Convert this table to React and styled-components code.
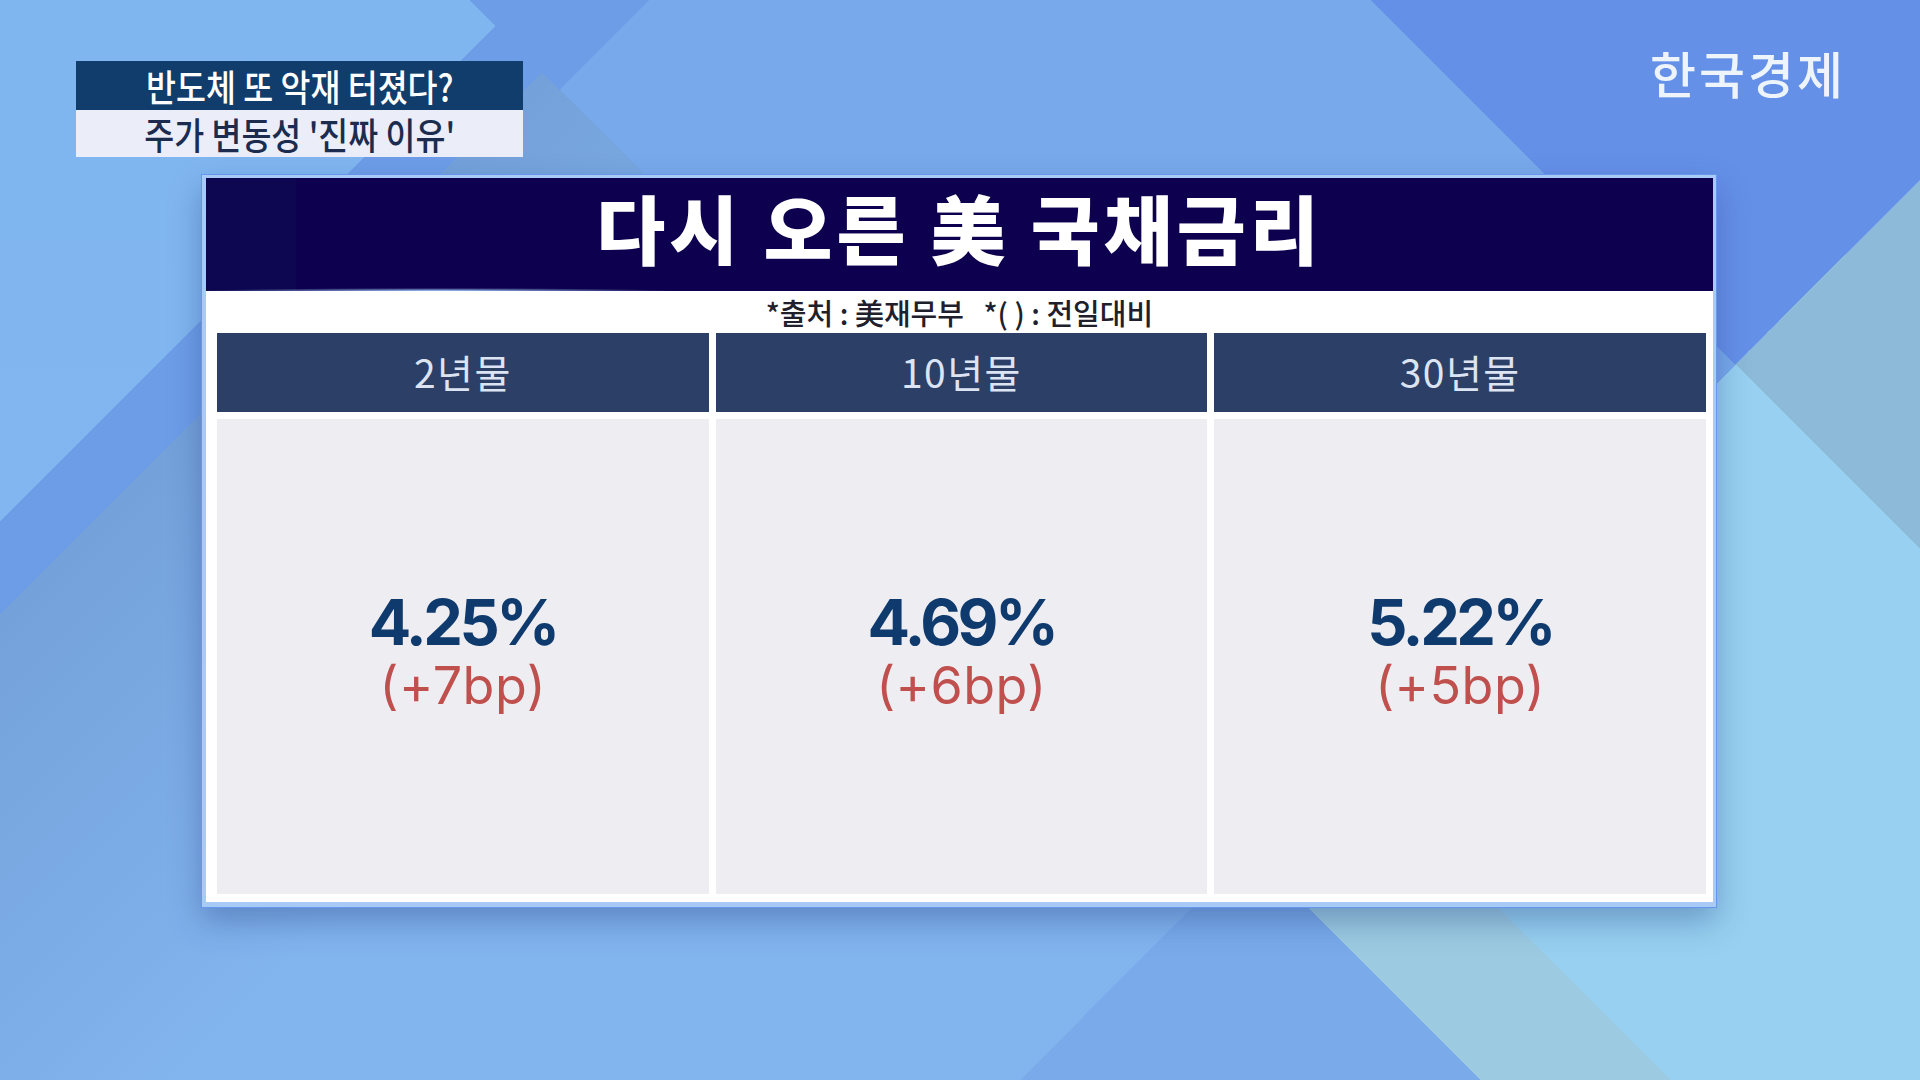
import styled, { createGlobalStyle } from "styled-components";

const GlobalStyle = createGlobalStyle`
    html, body {
        margin: 0;
        padding: 0;
    }
    body {
        width: 1920px;
        height: 1080px;
        overflow: hidden;
        background: #80b5ef;
    }
`;

// one quarter wedge of colour, opening clockwise from `from` degrees at (x, y)
const wedge = (x, y, from, color) =>
    `conic-gradient(from ${from}deg at ${x}px ${y}px, ${color} 0deg 90deg, transparent 90deg)`;

const backdrop = [
    wedge(1250, 850, 135, "#7aaaea"),
    wedge(1735.5, 364.5, 45, "#8cbad8"),
    wedge(1345, 755, 45, "#97d0f0"),
    wedge(1250, 850, 45, "#9ccbe1"),
    wedge(1735.5, 364.5, 315, "#6590e8"),
    wedge(560, 90, 45, "#78a9eb"),
    wedge(560, 90, 315, "#6d9de7"),
    "linear-gradient(135deg, transparent 17.4%, #6e9de8 17.4%, #6e9de8 20.5%, transparent 20.5%)",
    "linear-gradient(135deg, transparent 20.5%, #74a1da 20.5%, #82b4ee 42%)",
    "linear-gradient(180deg, #80b6f0, #82b6f0)",
].join(", ");

const Stage = styled.div`
    width: 1920px;
    height: 1080px;
    box-sizing: border-box;
    padding: 61px 74px 0 76px;
    display: flex;
    flex-direction: column;
    background: ${backdrop};
    font-family: "Noto Sans CJK KR", "Noto Sans", sans-serif;
`;

const TopRow = styled.div`
    display: flex;
    justify-content: space-between;
    align-items: flex-start;
    height: 96px;
`;

const Caption = styled.div`
    width: 447px;
    display: flex;
    flex-direction: column;
`;

const CaptionLine = styled.div`
    height: ${({ h }) => h}px;
    display: flex;
    align-items: center;
    justify-content: center;
    background: ${({ dark }) => (dark ? "#113d6c" : "#ebedf8")};
    color: ${({ dark }) => (dark ? "#ffffff" : "#1b2c4f")};
    font-size: 37px;
    font-weight: 500;
    line-height: 40px;
`;

const Squeeze = styled.span`
    display: inline-block;
    white-space: nowrap;
    transform: scaleX(0.88);
`;

const Logo = styled.div`
    margin-top: -14px;
    font-size: 50px;
    font-weight: 500;
    line-height: 1;
    letter-spacing: 3px;
    color: #eef4fc;
`;

const Panel = styled.section`
    margin: 18px 0 0 126px;
    width: 1514px;
    height: 732px;
    box-sizing: border-box;
    border-style: solid;
    border-color: #a7caf7;
    border-width: 3px 3px 5px 4px;
    background: #ffffff;
    box-shadow: 0 0 0 1px #6797ea, 0 14px 30px rgba(25, 55, 120, 0.35);
    display: flex;
    flex-direction: column;
`;

const Headline = styled.h1`
    margin: 0;
    height: 113px;
    flex: none;
    box-sizing: border-box;
    padding-bottom: 16px;
    display: flex;
    align-items: center;
    justify-content: center;
    background:
        radial-gradient(ellipse 240px 3px at 232px 100%, rgba(170, 215, 255, 0.95), transparent),
        linear-gradient(90deg, #0c0750 0, #0c0750 90px, #0d004f 90px);
    color: #ffffff;
    font-size: 75px;
    font-weight: 900;
    line-height: 1;
    letter-spacing: 4px;
`;

const Source = styled.p`
    margin: 0;
    height: 42px;
    flex: none;
    display: flex;
    align-items: center;
    justify-content: center;
    white-space: pre;
    font-size: 29px;
    font-weight: 500;
    line-height: 36px;
    color: #20202c;
`;

const Grid = styled.div`
    display: grid;
    grid-template-columns: repeat(3, 1fr);
    grid-template-rows: 79px 475px;
    grid-auto-flow: column;
    gap: 7px;
    padding: 0 7px 8px 11px;
`;

const ColHead = styled.div`
    display: flex;
    align-items: center;
    justify-content: center;
    padding-bottom: 4px;
    background: #2c3f66;
    color: #dce4f4;
    font-size: 39px;
    font-weight: 400;
    letter-spacing: 1.5px;
`;

const ColBody = styled.div`
    display: flex;
    flex-direction: column;
    align-items: center;
    justify-content: center;
    padding-bottom: 8px;
    background: #eeedf2;
    font-family: Inter, "Noto Sans", sans-serif;
`;

const Rate = styled.div`
    font-size: 63px;
    font-weight: 700;
    line-height: 64px;
    letter-spacing: -3.5px;
    color: #0f3a6d;
`;

const Change = styled.div`
    margin-top: 2px;
    font-size: 52px;
    font-weight: 400;
    line-height: 60px;
    letter-spacing: 0.5px;
    color: #c0504e;
`;

const bonds = [
    { term: "2년물", rate: "4.25%", change: "(+7bp)" },
    { term: "10년물", rate: "4.69%", change: "(+6bp)" },
    { term: "30년물", rate: "5.22%", change: "(+5bp)" },
];

export default function App() {
    return (
        <>
            <GlobalStyle />
            <Stage>
                <TopRow>
                    <Caption>
                        <CaptionLine h={49} dark>
                            <Squeeze>반도체 또 악재 터졌다?</Squeeze>
                        </CaptionLine>
                        <CaptionLine h={47}>
                            <Squeeze>주가 변동성 '진짜 이유'</Squeeze>
                        </CaptionLine>
                    </Caption>
                    <Logo>한국경제</Logo>
                </TopRow>
                <Panel>
                    <Headline>다시 오른 美 국채금리</Headline>
                    <Source>{"*출처 : 美재무부   *( ) : 전일대비"}</Source>
                    <Grid>
                        {bonds.map(({ term, rate, change }) => [
                            <ColHead key={term + "-head"}>{term}</ColHead>,
                            <ColBody key={term + "-body"}>
                                <Rate>{rate}</Rate>
                                <Change>{change}</Change>
                            </ColBody>,
                        ])}
                    </Grid>
                </Panel>
            </Stage>
        </>
    );
}
